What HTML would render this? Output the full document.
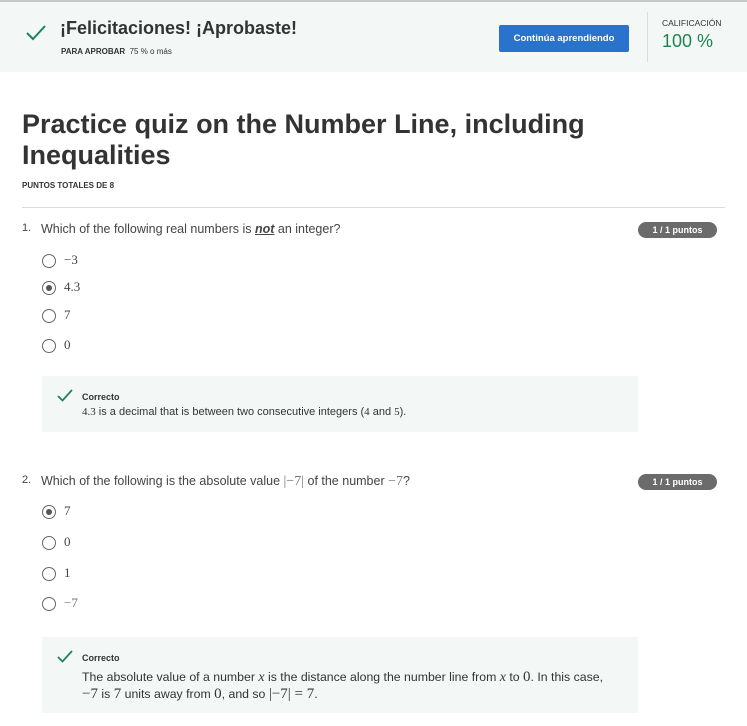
<!DOCTYPE html>
<html><head><meta charset="utf-8"><style>
*{margin:0;padding:0;box-sizing:border-box}
body{width:747px;height:726px;overflow:hidden;background:#fff;font-family:"Liberation Sans",sans-serif;color:#333;position:relative}
.a{position:absolute;white-space:nowrap}
.hdr{position:absolute;left:0;top:0;width:747px;height:72px;background:#f3f8f6;border-top:2px solid #c8c8c8}
.m{font-family:"Liberation Serif",serif}
.radio{position:absolute;left:42px;width:14px;height:14px;border:1.5px solid #666;border-radius:50%;background:#fff}
.radio.s::after{content:"";position:absolute;left:2.5px;top:2.5px;width:6px;height:6px;border-radius:50%;background:#555}
.opt{position:absolute;left:64px;font-family:"Liberation Serif",serif;font-size:13px;color:#444}
.badge{position:absolute;left:638px;width:79px;height:16px;background:#6b6b6b;border-radius:8px;color:#fff;font-size:9px;font-weight:bold;text-align:center;line-height:16px}
.fb{position:absolute;left:42px;width:596px;background:#f3f8f6}
.q{position:absolute;font-size:12.5px;color:#444}
</style></head><body>
<div class="hdr"></div>
<svg class="a" style="left:26px;top:25px" width="20" height="16" viewBox="0 0 20 16"><path d="M1 8 L7 14 L19 1" fill="none" stroke="#1f8354" stroke-width="2"/></svg>
<div class="a" style="left:60px;top:18px;font-size:18px;font-weight:bold;color:#333">¡Felicitaciones! ¡Aprobaste!</div>
<div class="a" style="left:61px;top:47px;font-size:8px;color:#333"><b>PARA APROBAR</b>&nbsp; 75 % o más</div>
<div class="a" style="left:499px;top:25px;width:130px;height:27px;background:#2a73cc;border-radius:2px;color:#fff;font-size:9.5px;font-weight:bold;text-align:center;line-height:27px">Continúa aprendiendo</div>
<div class="a" style="left:647px;top:12px;width:1px;height:50px;background:#dcdcdc"></div>
<div class="a" style="left:662px;top:18px;font-size:8.5px;color:#333">CALIFICACIÓN</div>
<div class="a" style="left:662px;top:31px;font-size:18px;color:#1f8354">100 %</div>

<div class="a" style="left:22px;top:109px;font-size:27px;font-weight:bold;color:#333;line-height:31px;white-space:normal;width:620px">Practice quiz on the Number Line, including Inequalities</div>
<div class="a" style="left:22px;top:181px;font-size:8px;font-weight:bold;color:#333">PUNTOS TOTALES DE 8</div>
<div class="a" style="left:22px;top:207px;width:703px;height:1px;background:#dcdcdc"></div>

<div class="q" style="left:22px;top:222px;font-size:11px">1.</div>
<div class="q" style="left:41px;top:222px">Which of the following real numbers is <b><i><u>not</u></i></b> an integer?</div>
<div class="badge" style="top:222px">1 / 1 puntos</div>
<div class="radio" style="top:254px"></div><div class="opt" style="top:252px">−3</div>
<div class="radio s" style="top:281px"></div><div class="opt" style="top:279px">4.3</div>
<div class="radio" style="top:309px"></div><div class="opt" style="top:307px">7</div>
<div class="radio" style="top:339px"></div><div class="opt" style="top:337px">0</div>
<div class="fb" style="top:376px;height:56px"></div>
<svg class="a" style="left:57px;top:389px" width="16" height="13" viewBox="0 0 16 13"><path d="M1 7 L5.5 11.5 L15 1" fill="none" stroke="#1f8354" stroke-width="1.8"/></svg>
<div class="a" style="left:82px;top:392px;font-size:9px;font-weight:bold;color:#333">Correcto</div>
<div class="a" style="left:82px;top:406px;font-size:11px;color:#333"><span class="m">4.3</span> is a decimal that is between two consecutive integers (<span class="m">4</span> and <span class="m">5</span>).</div>

<div class="q" style="left:22px;top:474px;font-size:11px">2.</div>
<div class="q" style="left:41px;top:474px">Which of the following is the absolute value <span class="m" style="color:#777;font-size:14px">|−7|</span> of the number <span class="m" style="color:#777;font-size:14px">−7</span>?</div>
<div class="badge" style="top:474px">1 / 1 puntos</div>
<div class="radio s" style="top:505px"></div><div class="opt" style="top:503px">7</div>
<div class="radio" style="top:536px"></div><div class="opt" style="top:534px">0</div>
<div class="radio" style="top:567px"></div><div class="opt" style="top:565px">1</div>
<div class="radio" style="top:597px"></div><div class="opt" style="top:595px;color:#777">−7</div>
<div class="fb" style="top:637px;height:76px"></div>
<svg class="a" style="left:57px;top:650px" width="16" height="13" viewBox="0 0 16 13"><path d="M1 7 L5.5 11.5 L15 1" fill="none" stroke="#1f8354" stroke-width="1.8"/></svg>
<div class="a" style="left:82px;top:653px;font-size:9px;font-weight:bold;color:#333">Correcto</div>
<div class="a" style="left:82px;top:669px;font-size:12.3px;color:#333">The absolute value of a number <i class="m" style="font-size:14px">x</i> is the distance along the number line from <i class="m" style="font-size:14px">x</i> to <span class="m" style="font-size:15px">0</span>. In this case,</div>
<div class="a" style="left:82px;top:686px;font-size:12.3px;color:#333"><span class="m" style="font-size:15px">−7</span> is <span class="m" style="font-size:15px">7</span> units away from <span class="m" style="font-size:15px">0</span>, and so <span class="m" style="font-size:15px">|−7| = 7</span>.</div>
</body></html>
